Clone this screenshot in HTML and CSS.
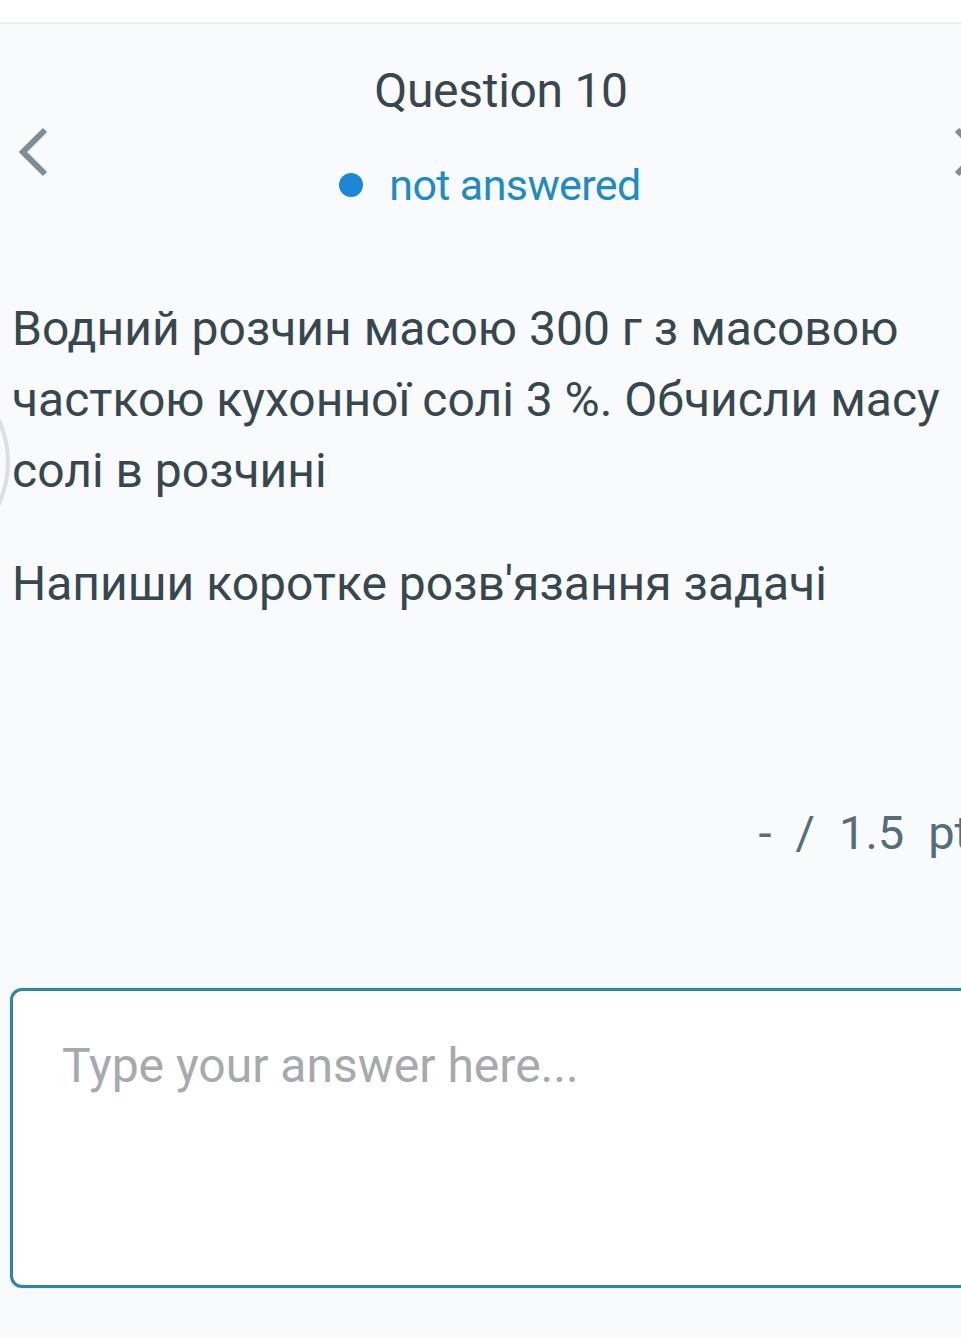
FILE: index.html
```html
<!DOCTYPE html>
<html lang="uk">
<head>
<meta charset="utf-8">
<title>Question 10</title>
<link rel="stylesheet" href="styles.css">
</head>
<body>
<div class="topbar"></div>
<main class="page">
  <svg class="circle-hint" width="60" height="140" viewBox="0 0 60 140" aria-hidden="true">
    <circle cx="-92" cy="70" r="100" fill="none" stroke="#dcdee0" stroke-width="4"/>
  </svg>
  <header class="qhead">
    <button class="nav prev" aria-label="Previous question">
      <svg width="34" height="50" viewBox="0 0 34 50"><path d="M29 3 L7 25 L29 47" fill="none" stroke="#7a8e98" stroke-width="6"/></svg>
    </button>
    <div class="qtitle">
      <h1>Question 10</h1>
      <div class="status"><span class="dot"></span><span class="status-text">not answered</span></div>
    </div>
    <button class="nav next" aria-label="Next question">
      <svg width="34" height="50" viewBox="0 0 34 50"><path d="M5 3 L27 25 L5 47" fill="none" stroke="#7a8e98" stroke-width="6"/></svg>
    </button>
  </header>
  <section class="question">
    <p>Водний розчин масою 300 г з масовою часткою кухонної солі 3 %. Обчисли масу солі в розчині</p>
    <p>Напиши коротке розв'язання задачі</p>
  </section>
  <div class="points"><span>-</span><span>/</span><span>1.5</span><span>pt</span></div>
  <div class="answer">
    <textarea placeholder="Type your answer here..."></textarea>
  </div>
</main>
</body>
</html>
```
FILE: styles.css
```css
html, body {
  margin: 0;
  padding: 0;
  background: #f8fafb;
  overflow: hidden;
}
body {
  font-family: Roboto, "Noto Sans", "Liberation Sans", sans-serif;
  color: #37474f;
  width: 961px;
  height: 1338px;
}
.topbar {
  height: 22px;
  background: #ffffff;
  border-bottom: 2px solid #eceff1;
}
.page {
  position: relative;
  width: 1002px;
  background: #f8fafb;
}
.circle-hint {
  position: absolute;
  left: 0;
  top: 368px;
}
.qhead {
  display: flex;
  align-items: flex-start;
  padding-top: 39px;
}
.nav {
  width: 66px;
  border: 0;
  background: transparent;
  padding: 0;
  margin-top: 64px;
  display: flex;
  cursor: pointer;
}
.nav.prev { justify-content: flex-start; padding-left: 16px; }
.nav.next { justify-content: flex-end; padding-right: 16px; }
.qtitle {
  flex: 1;
  display: flex;
  flex-direction: column;
  align-items: center;
}
.qtitle h1 {
  margin: 0;
  font-weight: 400;
  font-size: 48px;
  line-height: 56px;
  letter-spacing: -0.3px;
  color: #37474f;
}
.status {
  display: flex;
  align-items: center;
  gap: 26px;
  margin-top: 40px;
  margin-right: 22px;
}
.dot {
  width: 24px;
  height: 24px;
  border-radius: 50%;
  background: #1a87d8;
}
.status-text {
  font-size: 43px;
  line-height: 52px;
  color: #1c8bc6;
  letter-spacing: -0.6px;
}
.question {
  padding: 82px 12px 0 12px;
}
.question p {
  margin: 0;
  font-size: 48px;
  line-height: 71px;
  color: #37474f;
}
.question p + p {
  margin-top: 42px;
}
.points {
  display: flex;
  justify-content: flex-end;
  gap: 24px;
  padding: 186px 32px 0 0;
  font-size: 47px;
  line-height: 56px;
  color: #546e7a;
}
.answer {
  padding: 127px 10px 0 10px;
}
.answer textarea {
  display: block;
  box-sizing: border-box;
  width: 100%;
  height: 300px;
  border: 3px solid #3284a2;
  border-radius: 12px;
  box-shadow: 0 0 0 1px #d9f3f8;
  background: #ffffff;
  padding: 47px 20px 0 49px;
  font-family: Roboto, "Noto Sans", "Liberation Sans", sans-serif;
  font-size: 48px;
  line-height: 56px;
  color: #37474f;
  resize: none;
  outline: none;
}
.answer textarea::placeholder {
  color: #a6aaad;
}
```
